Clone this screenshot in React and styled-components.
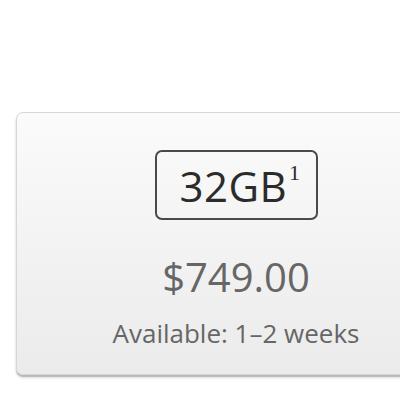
import React from "react";
import styled, { createGlobalStyle } from "styled-components";

const Global = createGlobalStyle`
  html, body { margin: 0; padding: 0; background: #ffffff; overflow: hidden; }
  body { width: 400px; height: 400px; font-family: "Open Sans", "Liberation Sans", sans-serif; }
`;

const Page = styled.div`
  width: 400px;
  height: 400px;
  padding-top: 112px;
  padding-left: 16px;
  box-sizing: border-box;
  overflow: hidden;
`;

const Card = styled.div`
  width: 440px;
  height: 263px;
  box-sizing: border-box;
  border: 1px solid #d6d6d6;
  border-radius: 7px;
  background: linear-gradient(#fbfbfb, #ebebeb);
  box-shadow: 0 2px 1px #b9b9b9, 0 3px 3px rgba(0,0,0,0.12);
  display: flex;
  flex-direction: column;
  align-items: center;
  padding-top: 37px;
`;

const Capacity = styled.div`
  width: 163px;
  height: 70px;
  box-sizing: border-box;
  border: 2px solid #4a4a4a;
  border-radius: 7px;
  display: flex;
  align-items: center;
  justify-content: center;
  color: #2b2b2b;
  font-size: 42px;
  letter-spacing: 0.5px;
  padding-left: 8px;
`;

const Sup = styled.sup`
  font-size: 22px;
  align-self: flex-start;
  margin-top: 8px;
  margin-left: 2px;
  font-family: "Liberation Serif", serif;
`;

const Price = styled.div`
  margin-top: 33px;
  color: #666666;
  font-size: 40px;
  line-height: 48px;
`;

const Availability = styled.div`
  margin-top: 16px;
  color: #666666;
  font-size: 26px;
  line-height: 32px;
`;

export default function App() {
  return (
    <>
      <Global />
      <Page>
        <Card>
          <Capacity>
            32GB<Sup>1</Sup>
          </Capacity>
          <Price>$749.00</Price>
          <Availability>Available: 1–2 weeks</Availability>
        </Card>
      </Page>
    </>
  );
}
